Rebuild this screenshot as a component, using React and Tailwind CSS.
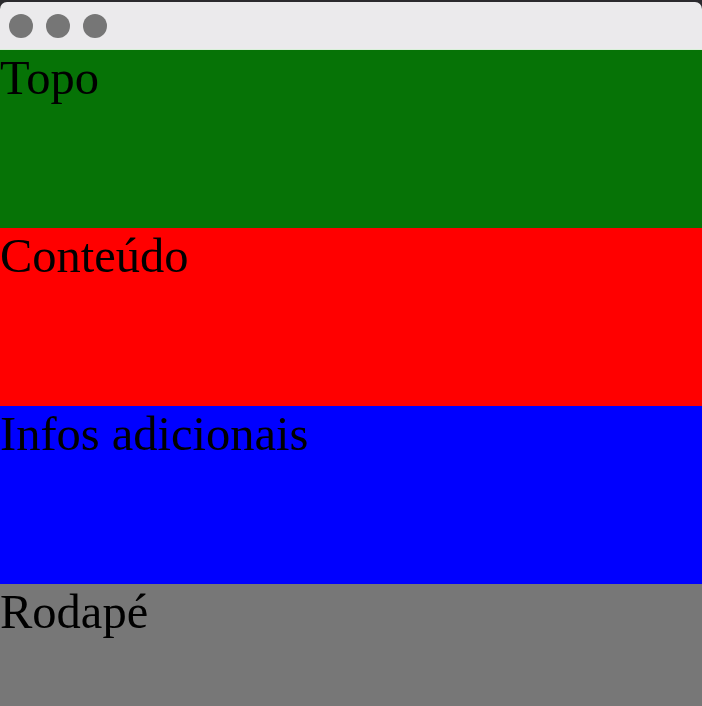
import React from "react";

const sections = [
  { label: "Topo", bg: "bg-[#067306]", h: "h-[178px]" },
  { label: "Conteúdo", bg: "bg-[#ff0000]", h: "h-[178px]" },
  { label: "Infos adicionais", bg: "bg-[#0000ff]", h: "h-[178px]" },
  { label: "Rodapé", bg: "bg-[#777777]", h: "flex-1" },
];

export default function App() {
  return (
    <div className="h-[706px] w-[702px] bg-[#2b2a2e] pt-[2px] flex flex-col overflow-hidden">
      {/* window title bar */}
      <div className="h-[48px] shrink-0 rounded-t-[7px] bg-[#ebeaec] border-b border-[#d9f0d9] flex items-center gap-[13px] pl-[9px]">
        <span className="w-6 h-6 rounded-full bg-[#767676]" />
        <span className="w-6 h-6 rounded-full bg-[#767676]" />
        <span className="w-6 h-6 rounded-full bg-[#767676]" />
      </div>

      {sections.map((s) => (
        <div
          key={s.label}
          className={`${s.bg} ${s.h} shrink-0 text-black text-[48.5px] leading-[normal] font-['Liberation_Serif',serif]`}
        >
          {s.label}
        </div>
      ))}
    </div>
  );
}
